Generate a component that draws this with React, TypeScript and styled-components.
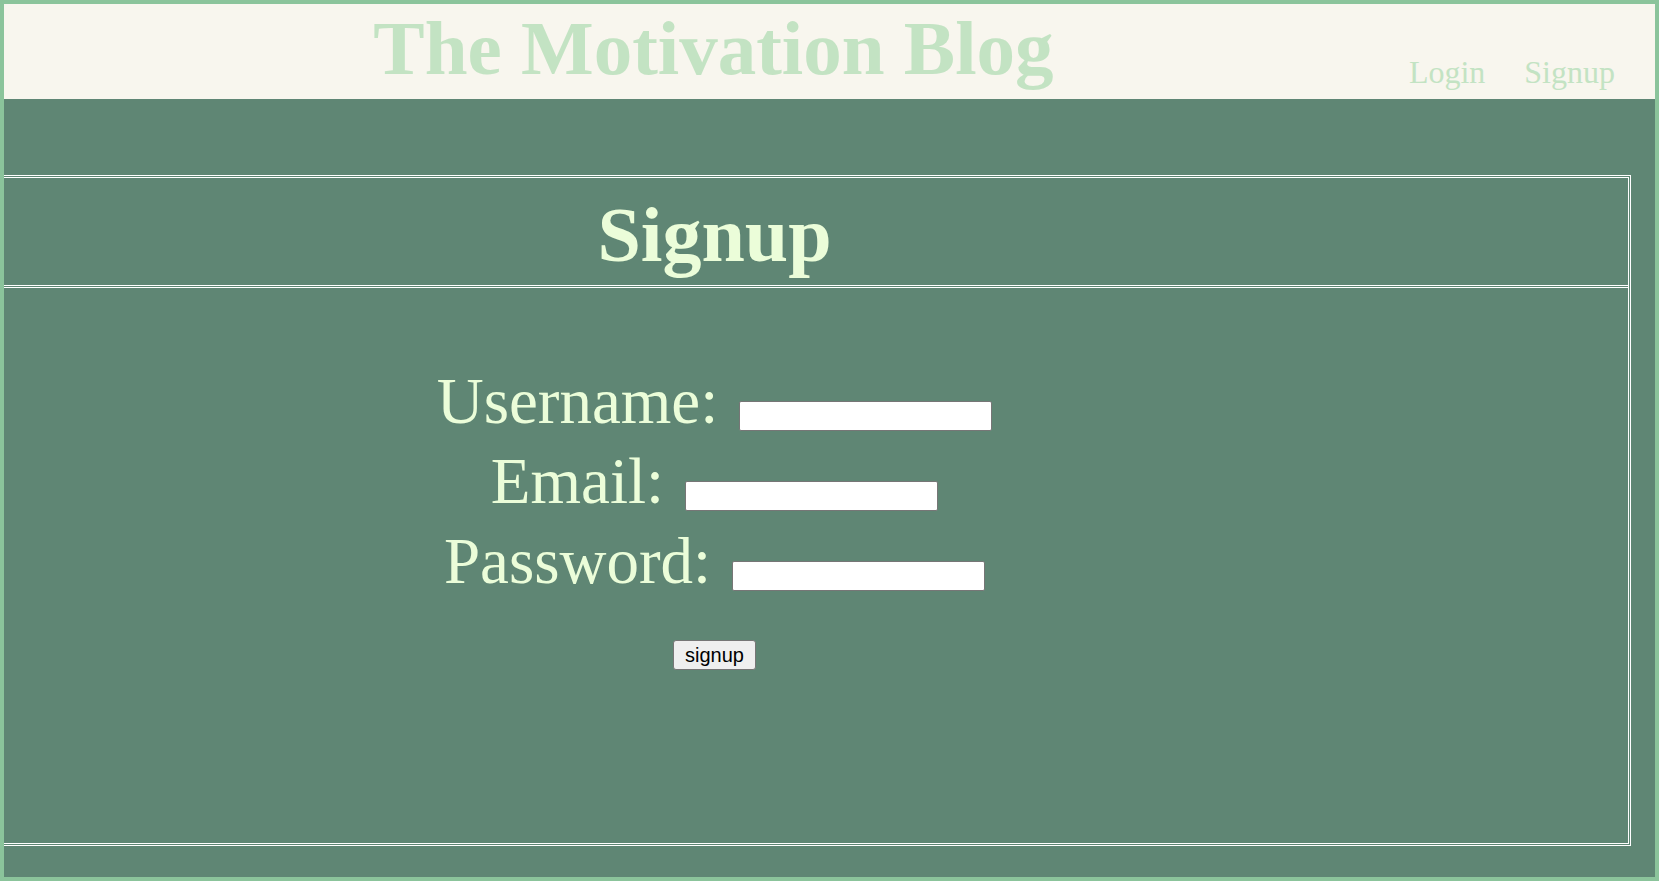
import React from "react";
import styled, { createGlobalStyle } from "styled-components";

const GlobalStyle = createGlobalStyle`
  html, body {
    margin: 0;
    padding: 0;
  }
  body {
    font-family: "Liberation Serif", "Times New Roman", serif;
  }
  * {
    box-sizing: border-box;
  }
`;

const Page = styled.div`
  height: 100vh;
  border: 4px solid #8bc49b;
  background: #5f8674;
  overflow: hidden;
  display: flex;
  flex-direction: column;
`;

const Header = styled.header`
  flex: 0 0 95px;
  background: #f8f6ee;
  display: flex;
  align-items: flex-start;
`;

const TitleArea = styled.div`
  flex: 1;
  padding-left: 14px;
  text-align: center;
`;

const Title = styled.h1`
  margin: 6px 0 0;
  font-family: "Liberation Serif", serif;
  font-weight: 700;
  font-size: 77px;
  line-height: 77px;
  color: #c3e3c3;
  white-space: nowrap;
`;

const Nav = styled.nav`
  display: flex;
  gap: 39px;
  padding-right: 40px;
  margin-top: 52px;
`;

const NavLink = styled.a`
  font-family: "Liberation Serif", serif;
  font-size: 32px;
  line-height: 32px;
  color: #c3e3c3;
  text-decoration: none;
`;

const Main = styled.main`
  flex: 1;
  display: flex;
  flex-direction: column;
  padding: 76px 0 31px;
`;

const Frame = styled.section`
  flex: 1;
  margin: 0 24px 0 -206px;
  border: 3px double #ffffff;
  display: flex;
  flex-direction: column;
`;

const FrameHead = styled.div`
  border-bottom: 3px double #ffffff;
  padding: 18px 0 11px;
  text-align: center;
`;

const Heading = styled.h2`
  margin: 0;
  font-family: "Liberation Serif", serif;
  font-weight: 700;
  font-size: 78px;
  line-height: 78px;
  color: #ebfdd9;
`;

const Form = styled.form`
  padding-top: 73px;
  display: flex;
  flex-direction: column;
  align-items: center;
`;

const Row = styled.div`
  text-align: center;
  font-family: "Liberation Serif", serif;
  font-size: 65px;
  line-height: 80px;
  color: #ebfdd9;
  white-space: nowrap;
`;

const Label = styled.label`
  margin-right: 21px;
`;

const FieldBox = styled.span`
  display: inline-block;
  overflow: hidden;
  vertical-align: -8px;
  line-height: normal;
`;

const Input = styled.input`
  display: block;
  width: 253px;
  height: 30px;
  margin: 0;
  padding: 1px 4px;
  border: 1px solid #767676;
  border-radius: 2px;
  background: #ffffff;
  font-family: "Liberation Sans", Arial, sans-serif;
  font-size: 16px;
`;

const Button = styled.button`
  margin-top: 39px;
  height: 30px;
  padding: 0 11px;
  font-family: "Liberation Sans", Arial, sans-serif;
  font-size: 20px;
  line-height: 22px;
  color: #000000;
  background: #efefef;
  border: 1px solid #767676;
  border-radius: 3px;
  cursor: pointer;
`;

const fields = [
  { id: "username", label: "Username:", type: "text" },
  { id: "email", label: "Email:", type: "email" },
  { id: "password", label: "Password:", type: "password" },
];

export default function App() {
  return (
    <>
      <GlobalStyle />
      <Page>
        <Header>
          <TitleArea>
            <Title>The Motivation Blog</Title>
          </TitleArea>
          <Nav>
            <NavLink href="#">Login</NavLink>
            <NavLink href="#">Signup</NavLink>
          </Nav>
        </Header>
        <Main>
          <Frame>
            <FrameHead>
              <Heading>Signup</Heading>
            </FrameHead>
            <Form onSubmit={(e) => e.preventDefault()}>
              {fields.map((f) => (
                <Row key={f.id}>
                  <Label htmlFor={f.id}>{f.label}</Label>
                  <FieldBox>
                    <Input id={f.id} type={f.type} />
                  </FieldBox>
                </Row>
              ))}
              <Button type="submit">signup</Button>
            </Form>
          </Frame>
        </Main>
      </Page>
    </>
  );
}
